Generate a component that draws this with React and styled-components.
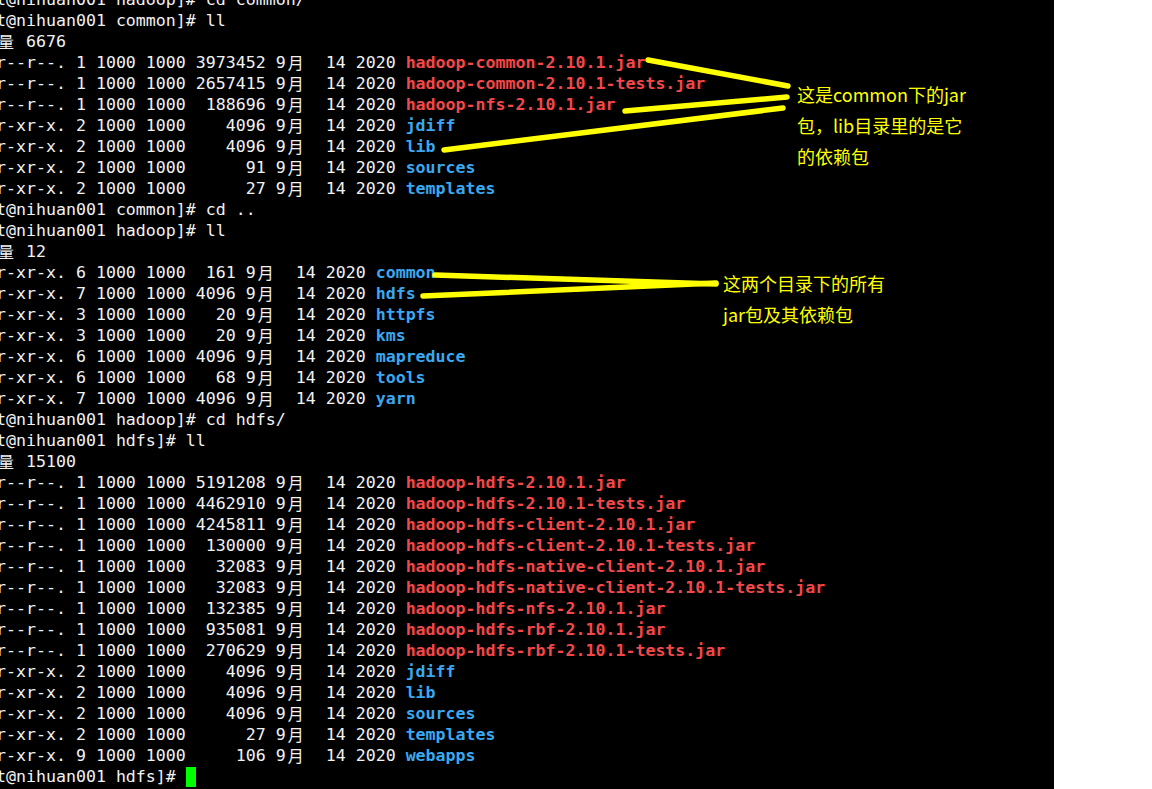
import React from 'react'
import styled, { createGlobalStyle } from 'styled-components'

const GlobalStyle = createGlobalStyle`
  html, body {
    margin: 0;
    padding: 0;
    background: #ffffff;
  }
  body {
    width: 1152px;
    height: 789px;
    overflow: hidden;
  }
`

// terminal lines, already cut to what is visible in the window
const lines = [
    { cmd: 't@nihuan001 hadoop]# cd common/' },
    { cmd: 't@nihuan001 common]# ll' },
    { total: '6676' },
    { perm: 'r--r--.', n: '1', size: '3973452', name: 'hadoop-common-2.10.1.jar', kind: 'jar' },
    { perm: 'r--r--.', n: '1', size: '2657415', name: 'hadoop-common-2.10.1-tests.jar', kind: 'jar' },
    { perm: 'r--r--.', n: '1', size: ' 188696', name: 'hadoop-nfs-2.10.1.jar', kind: 'jar' },
    { perm: 'r-xr-x.', n: '2', size: '   4096', name: 'jdiff', kind: 'dir' },
    { perm: 'r-xr-x.', n: '2', size: '   4096', name: 'lib', kind: 'dir' },
    { perm: 'r-xr-x.', n: '2', size: '     91', name: 'sources', kind: 'dir' },
    { perm: 'r-xr-x.', n: '2', size: '     27', name: 'templates', kind: 'dir' },
    { cmd: 't@nihuan001 common]# cd ..' },
    { cmd: 't@nihuan001 hadoop]# ll' },
    { total: '12' },
    { perm: 'r-xr-x.', n: '6', size: ' 161', name: 'common', kind: 'dir' },
    { perm: 'r-xr-x.', n: '7', size: '4096', name: 'hdfs', kind: 'dir' },
    { perm: 'r-xr-x.', n: '3', size: '  20', name: 'httpfs', kind: 'dir' },
    { perm: 'r-xr-x.', n: '3', size: '  20', name: 'kms', kind: 'dir' },
    { perm: 'r-xr-x.', n: '6', size: '4096', name: 'mapreduce', kind: 'dir' },
    { perm: 'r-xr-x.', n: '6', size: '  68', name: 'tools', kind: 'dir' },
    { perm: 'r-xr-x.', n: '7', size: '4096', name: 'yarn', kind: 'dir' },
    { cmd: 't@nihuan001 hadoop]# cd hdfs/' },
    { cmd: 't@nihuan001 hdfs]# ll' },
    { total: '15100' },
    { perm: 'r--r--.', n: '1', size: '5191208', name: 'hadoop-hdfs-2.10.1.jar', kind: 'jar' },
    { perm: 'r--r--.', n: '1', size: '4462910', name: 'hadoop-hdfs-2.10.1-tests.jar', kind: 'jar' },
    { perm: 'r--r--.', n: '1', size: '4245811', name: 'hadoop-hdfs-client-2.10.1.jar', kind: 'jar' },
    { perm: 'r--r--.', n: '1', size: ' 130000', name: 'hadoop-hdfs-client-2.10.1-tests.jar', kind: 'jar' },
    { perm: 'r--r--.', n: '1', size: '  32083', name: 'hadoop-hdfs-native-client-2.10.1.jar', kind: 'jar' },
    { perm: 'r--r--.', n: '1', size: '  32083', name: 'hadoop-hdfs-native-client-2.10.1-tests.jar', kind: 'jar' },
    { perm: 'r--r--.', n: '1', size: ' 132385', name: 'hadoop-hdfs-nfs-2.10.1.jar', kind: 'jar' },
    { perm: 'r--r--.', n: '1', size: ' 935081', name: 'hadoop-hdfs-rbf-2.10.1.jar', kind: 'jar' },
    { perm: 'r--r--.', n: '1', size: ' 270629', name: 'hadoop-hdfs-rbf-2.10.1-tests.jar', kind: 'jar' },
    { perm: 'r-xr-x.', n: '2', size: '   4096', name: 'jdiff', kind: 'dir' },
    { perm: 'r-xr-x.', n: '2', size: '   4096', name: 'lib', kind: 'dir' },
    { perm: 'r-xr-x.', n: '2', size: '   4096', name: 'sources', kind: 'dir' },
    { perm: 'r-xr-x.', n: '2', size: '     27', name: 'templates', kind: 'dir' },
    { perm: 'r-xr-x.', n: '9', size: '    106', name: 'webapps', kind: 'dir' },
    { cmd: 't@nihuan001 hdfs]# ', cursor: true },
]

const strokes = [
    [648, 60, 788, 86],
    [625, 111, 787, 97],
    [444, 150, 783, 108],
    [435, 275, 716, 284],
    [423, 296, 716, 283],
]

const App = () => {
    const renderLine = (line, index) => {
        if (line.cmd !== undefined) {
            return (
                <Line key={index}>
                    {line.cmd}
                    {line.cursor && <Cursor />}
                </Line>
            )
        }
        if (line.total !== undefined) {
            return (
                <Line key={index}>
                    <Wide>量</Wide>{` ${line.total}`}
                </Line>
            )
        }
        return (
            <Line key={index}>
                {`${line.perm} ${line.n} 1000 1000 ${line.size} 9`}
                <Wide>月</Wide>
                {'  14 2020 '}
                <FileName kind={line.kind}>{line.name}</FileName>
            </Line>
        )
    }

    return (
        <>
            <GlobalStyle />
            <Page>
                <Terminal>
                    <Screen>{lines.map(renderLine)}</Screen>
                    <Marks viewBox="0 0 1054 789" width="1054" height="789">
                        {strokes.map(([x1, y1, x2, y2], i) => (
                            <line key={i} x1={x1} y1={y1} x2={x2} y2={y2}
                                stroke="#ffff00" strokeWidth="5.5" strokeLinecap="round" />
                        ))}
                    </Marks>
                    <Note top={79} left={797}>
                        <NoteLine>这是common下的jar</NoteLine>
                        <NoteLine>包，lib目录里的是它</NoteLine>
                        <NoteLine>的依赖包</NoteLine>
                    </Note>
                    <Note top={268} left={723}>
                        <NoteLine>这两个目录下的所有</NoteLine>
                        <NoteLine>jar包及其依赖包</NoteLine>
                    </Note>
                </Terminal>
            </Page>
        </>
    )
}

const Page = styled.div`
  display: flex;
  width: 1152px;
  height: 789px;
  background: #ffffff;
`

const Terminal = styled.div`
  position: relative;
  width: 1054px;
  height: 789px;
  background: #000000;
  overflow: hidden;
`

const Screen = styled.div`
  margin-top: -11px;
  margin-left: -4px;
  font-family: "DejaVu Sans Mono", "Noto Sans CJK SC", monospace;
  font-size: 16.6px;
  color: #f2f2f2;
`

const Line = styled.div`
  height: 21px;
  line-height: 21px;
  white-space: pre;
`

const Wide = styled.span`
  display: inline-block;
  width: 20px;
  height: 21px;
  vertical-align: top;
  font-family: "Noto Sans CJK SC", sans-serif;
  font-size: 16px;
  line-height: 21px;
  text-align: center;
  overflow: hidden;
`

const FileName = styled.span`
  font-weight: bold;
  color: ${(p) => (p.kind === 'jar' ? '#f44848' : '#3aa8f0')};
`

const Cursor = styled.span`
  display: inline-block;
  width: 10px;
  height: 20px;
  margin-top: 1px;
  vertical-align: top;
  background: #00ff00;
`

const Marks = styled.svg`
  position: absolute;
  left: 0;
  top: 0;
  pointer-events: none;
`

const Note = styled.div`
  position: absolute;
  top: ${(p) => p.top}px;
  left: ${(p) => p.left}px;
  font-family: "Noto Sans CJK SC", "Liberation Sans", sans-serif;
  font-size: 18px;
  line-height: 31px;
  color: #ffff00;
  white-space: pre;
`

const NoteLine = styled.div`
  height: 31px;
`

export default App
